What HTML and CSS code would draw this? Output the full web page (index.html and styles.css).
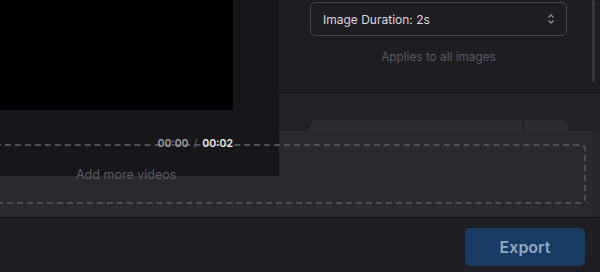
FILE: index.html
```html
<!DOCTYPE html>
<html lang="en">
<head>
    <meta charset="UTF-8">
    <meta name="viewport" content="width=device-width, initial-scale=1.0">
    <title>Editor</title>
    <link rel="stylesheet" href="styles.css">
</head>
<body>
    <div class="app">
        <div class="workspace">
            <section class="preview">
                <div class="video"></div>
                <div class="time">
                    <span class="current">00:00</span>
                    <span class="sep">/</span>
                    <span class="total">00:02</span>
                </div>
            </section>

            <aside class="settings">
                <div class="settings-top">
                    <div class="select">
                        <span>Image Duration: 2s</span>
                        <svg width="8" height="12" viewBox="0 0 8 12">
                            <path d="M1.5 4.5 L4 2 L6.5 4.5" fill="none" stroke="#8b8a90" stroke-width="1.3"/>
                            <path d="M1.5 7.5 L4 10 L6.5 7.5" fill="none" stroke="#8b8a90" stroke-width="1.3"/>
                        </svg>
                    </div>
                    <p class="hint">Applies to all images</p>
                </div>
                <div class="settings-bottom">
                    <div class="tabs">
                        <span class="tab-main"></span>
                        <span class="tab-side"></span>
                    </div>
                </div>
                <!-- scroll track -->
                <div class="scrollbar"></div>
            </aside>
        </div>

        <div class="drop-bar">
            <div class="dropzone">Add more videos</div>
        </div>

        <footer class="footer">
            <button class="export">Export</button>
        </footer>
    </div>
</body>
</html>
```

FILE: styles.css
```css
* {
    box-sizing: border-box;
}
body {
    margin: 0;
    padding: 0;
    background-color: #1f1e23;
    font-family: Inter, 'Noto Sans', sans-serif;
    overflow: hidden;
}
.app {
    width: 600px;
    height: 272px;
    display: flex;
    flex-direction: column;
}
.workspace {
    height: 131px;
    display: grid;
    grid-template-columns: 279px 1fr;
}
.preview {
    position: relative;
    height: 176px;
    background-color: #17161b;
    display: flex;
    flex-direction: column;
}
.video {
    width: 233px;
    height: 110px;
    background-color: #000;
}
.time {
    position: relative;
    z-index: 1;
    display: flex;
    justify-content: flex-end;
    gap: 5px;
    padding-right: 46px;
    margin-top: 28px;
    font-size: 10.5px;
    font-weight: 600;
    line-height: 12px;
}
.time .current {
    color: #9c9ba1;
}
.time .sep {
    color: #6a696f;
    font-weight: 400;
}
.time .total {
    color: #e6e6e8;
}
.settings {
    position: relative;
    height: 131px;
    overflow: hidden;
    background-color: #1e1d22;
    display: flex;
    flex-direction: column;
}
.settings-top {
    height: 93px;
    flex-shrink: 0;
    border-bottom: 1px solid #151418;
    padding: 2px 0 0 31px;
}
.select {
    width: 257px;
    height: 34px;
    border: 1px solid #47464b;
    border-radius: 5px;
    display: flex;
    align-items: center;
    justify-content: space-between;
    padding: 0 11px 0 12px;
    color: #d9d9db;
    font-size: 12px;
}
.hint {
    margin: 14px 0 0 0;
    width: 257px;
    text-align: center;
    color: #5b5a60;
    font-size: 11.8px;
    line-height: 14px;
}
.settings-bottom {
    flex: 1;
    background-color: #222126;
    padding: 27px 0 0 31px;
}
.tabs {
    display: flex;
    gap: 1px;
    width: 258px;
    height: 30px;
    background-color: #1c1b20;
    border-radius: 6px;
    overflow: hidden;
}
.tab-main {
    width: 213px;
    background-color: #2c2b30;
}
.tab-side {
    flex: 1;
    background-color: #2c2b30;
}
.scrollbar {
    position: absolute;
    top: 0;
    left: 313px;
    width: 3px;
    height: 82px;
    border-radius: 2px;
    background-color: #37363b;
}
.drop-bar {
    height: 86px;
    background-color: #2a292e;
    padding: 13px 7px 0 0;
    border-right: 7px solid #252429;
}
.dropzone {
    position: relative;
    margin-left: -10px;
    height: 60px;
    border: 2px dashed #504f55;
    border-radius: 5px;
    display: flex;
    align-items: center;
    padding: 0 0 0 84px;
    color: #5d5c62;
    font-size: 12.5px;
}
.footer {
    flex: 1;
    background-color: #1f1e23;
    border-top: 1px solid #17161a;
    display: flex;
    justify-content: flex-end;
    align-items: flex-start;
    padding: 10px 15px 0 0;
}
.export {
    width: 120px;
    height: 38px;
    border: none;
    outline: none;
    border-radius: 5px;
    background-color: #173b63;
    color: #8fa8c6;
    font-family: Inter, 'Noto Sans', sans-serif;
    font-size: 16px;
    font-weight: 600;
    cursor: pointer;
}
```
